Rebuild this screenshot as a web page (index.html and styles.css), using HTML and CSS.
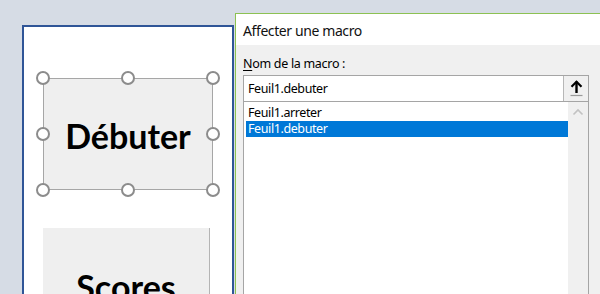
FILE: index.html
```html
<!DOCTYPE html>
<html lang="fr">
<head>
<meta charset="utf-8">
<title>Affecter une macro</title>
<link rel="stylesheet" href="styles.css">
</head>
<body>
<div class="screen">
  <div class="sheet">
    <div class="shape selected">
      <span class="shape-label">Débuter</span>
      <span class="handle h-tl"></span>
      <span class="handle h-tc"></span>
      <span class="handle h-tr"></span>
      <span class="handle h-ml"></span>
      <span class="handle h-mr"></span>
      <span class="handle h-bl"></span>
      <span class="handle h-bc"></span>
      <span class="handle h-br"></span>
    </div>
    <div class="shape scores">
      <span class="shape-label">Scores</span>
    </div>
  </div>
  <div class="dialog">
    <div class="titlebar">Affecter une macro</div>
    <div class="body">
      <div class="label"><u>N</u>om de la macro :</div>
      <div class="input">
        <span class="input-text">Feuil1.debuter</span>
        <span class="upbtn">
          <svg width="13" height="17" viewBox="0 0 13 17">
            <path d="M6.5 1.5 L6.5 13" stroke="#000" stroke-width="2.4" fill="none"/>
            <path d="M1.5 6.8 L6.5 1.8 L11.5 6.8" stroke="#000" stroke-width="2.2" fill="none"/>
            <path d="M0.5 15.5 L12.5 15.5" stroke="#9a9a9a" stroke-width="1.2"/>
          </svg>
        </span>
      </div>
      <div class="list">
        <div class="items">
          <div class="item">Feuil1.arreter</div>
          <div class="item active">Feuil1.debuter</div>
        </div>
        <div class="scrollbar">
          <svg width="12" height="8" viewBox="0 0 12 8"><path d="M1.5 6.5 L6 2 L10.5 6.5" stroke="#c2c2c2" stroke-width="1.6" fill="none"/></svg>
        </div>
      </div>
    </div>
  </div>
</div>
</body>
</html>
```
FILE: styles.css
```css
html, body {
  margin: 0;
  padding: 0;
}
body {
  width: 600px;
  height: 294px;
  overflow: hidden;
  background: #d6dce5;
}
.screen {
  display: flex;
  align-items: flex-start;
  height: 294px;
  overflow: hidden;
}
.sheet {
  margin-left: 22px;
  margin-top: 25px;
  width: 189px;
  height: 300px;
  border: 2px solid #2f5597;
  border-bottom: none;
  background: #fff;
  padding: 51px 0 0 19px;
  box-sizing: content-box;
  display: flex;
  flex-direction: column;
  gap: 38px;
  flex-shrink: 0;
}
.shape {
  position: relative;
  width: 169px;
  height: 111px;
  background: #efefef;
  display: flex;
  justify-content: center;
  align-items: center;
  font-family: Lato, "Open Sans", sans-serif;
  font-weight: 700;
  font-size: 34px;
  color: #000;
}
.shape.selected {
  border: 1px solid #a6a6a6;
  width: 168px;
  height: 110px;
}
.shape-label {
  margin-top: 2px;
}
.scores {
  border-right: 1px solid #b4b4b4;
  width: 167px;
  align-items: flex-start;
  padding-top: 36px;
  box-sizing: border-box;
  height: 120px;
}
.handle {
  position: absolute;
  width: 10px;
  height: 10px;
  border: 2px solid #8c8c8c;
  border-radius: 50%;
  background: #fff;
  box-sizing: content-box;
}
.h-tl { left: -8px; top: -8px; }
.h-tc { left: 77px; top: -8px; }
.h-tr { right: -8px; top: -8px; }
.h-ml { left: -8px; top: 48px; }
.h-mr { right: -8px; top: 48px; }
.h-bl { left: -8px; bottom: -8px; }
.h-bc { left: 77px; bottom: -8px; }
.h-br { right: -8px; bottom: -8px; }

.dialog {
  margin-left: 1px;
  margin-top: 13px;
  flex: 1;
  height: 300px;
  border-left: 1px solid #8cc152;
  border-top: 1px solid #8cc152;
  background: #f0f0f0;
  font-family: "Segoe UI", "Noto Sans", "Open Sans", sans-serif;
  color: #000;
}
.titlebar {
  height: 31px;
  background: #fff;
  padding-left: 7px;
  font-size: 14px;
  letter-spacing: -0.4px;
  line-height: 33px;
  color: #111;
}
.body {
  padding: 10px 0 0 7px;
}
.label {
  font-size: 12.5px;
  letter-spacing: -0.3px;
  line-height: 17px;
  height: 20px;
}
.label u {
  text-decoration-thickness: 1px;
  text-underline-offset: 2px;
}
.input {
  width: 344px;
  height: 25px;
  border: 1px solid #a5a5a5;
  background: #fff;
  display: flex;
  align-items: stretch;
  justify-content: space-between;
}
.input-text {
  padding-left: 4px;
  font-size: 12.5px;
  letter-spacing: -0.4px;
  line-height: 25px;
}
.upbtn {
  width: 24px;
  border-left: 1px solid #b7b7b7;
  background: #f0f0f0;
  display: flex;
  justify-content: center;
  align-items: center;
}
.list {
  width: 344px;
  height: 200px;
  border: 1px solid #a5a5a5;
  border-top: none;
  background: #fff;
  display: flex;
}
.items {
  flex: 1;
  padding: 3px 0 0 2px;
}
.item {
  height: 16px;
  line-height: 16px;
  font-size: 12.5px;
  letter-spacing: -0.4px;
  padding-left: 2px;
}
.item.active {
  background: #0078d7;
  color: #fff;
}
.scrollbar {
  width: 20px;
  background: #f0f0f0;
  display: flex;
  justify-content: center;
  padding-top: 6px;
  align-items: flex-start;
}
```
